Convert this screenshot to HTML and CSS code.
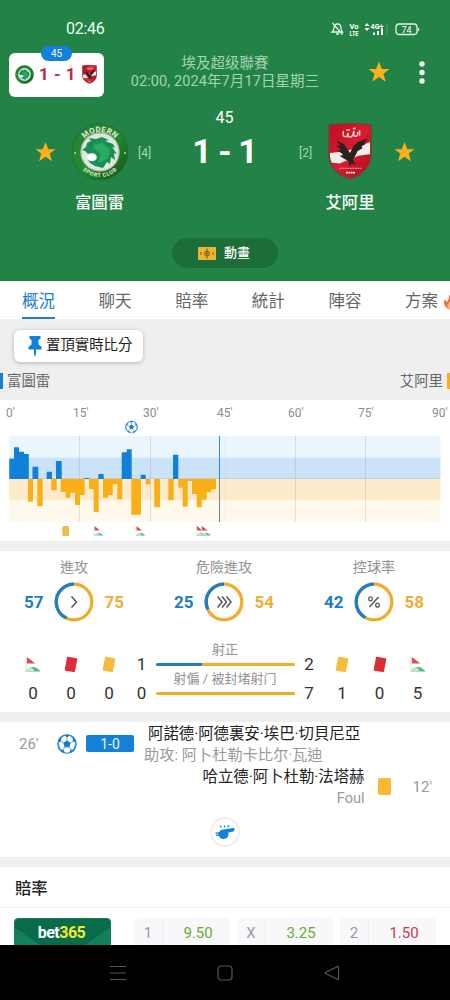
FILE: index.html
```html
<!DOCTYPE html>
<html lang="zh-Hant">
<head>
<meta charset="utf-8">
<title>富圖雷 1 - 1 艾阿里</title>
<link rel="stylesheet" href="styles.css">
</head>
<body>
<svg class="defs" width="0" height="0">
  <defs>
    <linearGradient id="crestGreen" x1="0" y1="0" x2="1" y2="1"><stop offset="0" stop-color="#2a7d36"/><stop offset=".5" stop-color="#238d2b"/><stop offset="1" stop-color="#174f1c"/></linearGradient>
    <linearGradient id="crestRed" x1="0" y1="0" x2="1" y2="1"><stop offset="0" stop-color="#b80e22"/><stop offset=".5" stop-color="#dc1b2c"/><stop offset="1" stop-color="#a90d1d"/></linearGradient>
    <clipPath id="shieldClip"><path d="M3 3Q24-1 45 3V34C44 46 35 52 24 57C13 52 4 46 3 34Z"/></clipPath>
    <path id="arcTop" d="M8 30A21 21 0 0 1 50 30"/>
    <path id="arcBottom" d="M4 29A25 25 0 0 0 54 29"/>
    <symbol id="crestHome" viewBox="0 0 58 58">
      <circle cx="29" cy="29" r="28" fill="url(#crestGreen)" stroke="#286b31" stroke-width="1"/>
      <circle cx="29" cy="29" r="19.500" fill="#dfe6e1"/>
      <circle cx="29" cy="29" r="19" fill="none" stroke="#9bb29f" stroke-width="1"/>
      <path d="M11 27L15 24L16 20L20 18L18 15L25 16L31 14L38 17L34 18L42 21L44 25L41 24L46 31L43 30L44 37L40 34L39 41L36 39L32 45L24 43L19 40L17 37Q24 40 26 35Q26 30 20 30L17 31L14 28Z" fill="#189052"/>
      <path d="M22 22L32 20L39 27L37 35L31 39L26 39Q31 34 28 29L23 26Z" fill="#2baa64"/>
      <path d="M16 33Q20 29 25 33Q25 38 20 38Q16 37 16 33Z" fill="#fff"/>
      <circle cx="4" cy="30" r="1" fill="#b9d9ac"/><circle cx="54" cy="30" r="1" fill="#b9d9ac"/>
    </symbol>
    <symbol id="crestAway" viewBox="0 0 48 60">
      <path d="M2 2Q24-2 46 2V34C45 47 36 54 24 58C12 54 3 47 2 34Z" fill="url(#crestRed)" stroke="#704735" stroke-width="2"/>
      <g clip-path="url(#shieldClip)"><path d="M3 31L13 30L24 28L34 24L46 19V32L33 34L13 42L3 41Z" fill="#f2eded"/></g>
      <path d="M17 8V13Q21 16 22 10V14Q27 16 28 8V13Q33 15 32 9M20 7H24M27 6L30 5M34 7V13" fill="none" stroke="#f4d5d2" stroke-width="1.500"/>
      <path d="M10 18L18 22L24 31L28 23L33 19L43 16L39 20L40 22L36 24L37 26L32 29L29 35L27 38L30 43L26 42L23 45L23 40L18 37L13 34L17 33L11 28L15 28L9 23L14 24Z" fill="#29231d"/>
      <path d="M13 47H36" stroke="#f1c3bd" stroke-width="1" stroke-dasharray="2 .7"/>
      <path d="M20 51.500H29" stroke="#fff" stroke-width="2" stroke-dasharray="1.800 .6"/>
    </symbol>
    <symbol id="star" viewBox="0 0 22 22"><path d="M11 .5L13.900 8H21.500L15.500 12.700L17.700 20.700L11 16L4.300 20.700L6.500 12.700L.5 8H8.100Z" fill="#fdb01b"/></symbol>
    <symbol id="ball" viewBox="0 0 20 20">
      <circle cx="10" cy="10" r="9.200" fill="#fff" stroke="#1c78c8" stroke-width="1.100"/>
      <path d="M10 6.200L13.700 8.900L12.300 13.200H7.700L6.300 8.900ZM6.800 1.400L10 3.300L13.200 1.400L11 .7H9ZM1 8.800L4 7.400L4.600 3.300L2.400 5.200ZM19 8.800L16 7.400L15.400 3.300L17.600 5.200ZM3 15.600L6.500 15.700L7.800 18.700L4.800 17.600ZM17 15.600L13.500 15.700L12.200 18.700L15.200 17.600Z" fill="#0f7dd3"/>
      <path d="M10 6V3M6.500 9L4 7.400M7.700 13L6.400 15.700M12.300 13L13.600 15.700M13.700 9L16 7.400M4.600 3.300L6.800 1.800M15.400 3.300L13.200 1.800M1.300 9L3 15.600M18.700 9L17 15.600" stroke="#1c78c8" stroke-width=".7" fill="none"/>
    </symbol>
    <symbol id="corner" viewBox="0 0 18 18"><path d="M2.500 1L11.500 8H2.500Z" fill="#dc4c56"/><path d="M1.500 1V15" stroke="#d7ded8" stroke-width="1"/><path d="M1 16.500Q9 7 17 16.500Z" fill="#55b886"/><path d="M1 16.500L6 11.700L10 14V16.500Z" fill="#c8e4d2"/></symbol>
    <symbol id="card" viewBox="0 0 14 17"><path d="M4 .8L12.500 2.200Q13.500 2.400 13.300 3.400L11 15.300Q10.800 16.300 9.800 16.100L1.500 14.700Q.5 14.500 .7 13.500L3 1.500Q3.200 .6 4 .8Z" fill="currentColor"/></symbol>
  </defs>
</svg>
<div class="phone">
  <header class="hero">
    <div class="status">
      <span class="clock">02:46</span>
      <svg class="status-icons" width="93" height="16" viewBox="0 0 93 16">
        <g fill="none" stroke="#e3f4e8" stroke-width="1.300"><path d="M1 11H11.500Q10 9.500 10 7Q10 3 6.500 3Q3.500 3 3 7Q3 9.500 1 11ZM5 13H8M1.500 2L11.500 13.500"/><rect x="65" y="3" width="21" height="10.500" rx="3.200"/><path d="M87.500 7V10"/></g>
        <g fill="#fff" class="status-text"><text x="18.500" y="8" textLength="9" lengthAdjust="spacingAndGlyphs">Vo</text><text x="18.500" y="15" textLength="9" lengthAdjust="spacingAndGlyphs">LTE</text><text x="39.500" y="7.500" textLength="13" lengthAdjust="spacingAndGlyphs">4G+</text><text class="battery" x="70.500" y="11.600">74</text><path d="M33.500 5L36 2L38.500 5ZM33.500 7L36 10L38.500 7ZM42 11.500H44V14H42ZM46 10H48V14H46ZM50 7.500H52V14H50Z"/></g>
        <path d="M56 3V14" stroke="#529e6d" stroke-width="1"/>
      </svg>
    </div>
    <div class="titlebar">
      <div class="mini-score">
        <span class="mini-minute">45</span>
        <svg width="19" height="19"><use href="#crestHome"/></svg>
        <b>1 - 1</b>
        <svg width="17" height="19"><use href="#crestAway"/></svg>
      </div>
      <div class="league"><div>埃及超级聯賽</div><div class="date">02:00, 2024年7月17日星期三</div></div>
      <svg class="fav" width="22" height="22"><use href="#star"/></svg>
      <svg class="more" width="8" height="24" fill="#f4fff7"><circle cx="4" cy="3" r="2.700"/><circle cx="4" cy="11.500" r="2.700"/><circle cx="4" cy="20" r="2.700"/></svg>
    </div>
    <div class="match">
      <svg class="fav-team" width="21" height="22"><use href="#star"/></svg>
      <svg class="crest" width="58" height="58" viewBox="0 0 58 58"><use href="#crestHome"/><g class="crest-text"><text><textPath href="#arcTop" startOffset="50%" text-anchor="middle">MODERN</textPath></text><text class="small"><textPath href="#arcBottom" startOffset="50%" text-anchor="middle">SPORT CLUB</textPath></text></g></svg>
      <span class="rank">[4]</span>
      <div class="score"><span>45</span><strong>1 - 1</strong></div>
      <span class="rank away">[2]</span>
      <svg class="crest" width="46" height="58"><use href="#crestAway"/></svg>
      <svg class="fav-team" width="21" height="22"><use href="#star"/></svg>
    </div>
    <div class="teams"><span>富圖雷</span><span>艾阿里</span></div>
    <div class="animate"><svg width="18" height="13" viewBox="0 0 18 13"><rect width="18" height="13" rx="1" fill="#f1b330"/><g fill="none" stroke="#785b18"><circle cx="9" cy="6.500" r="2.500"/><path d="M9 1.500V11.500M7.500 6.500H10.500"/><path d="M3 5V8M15 5V8"/></g></svg><span>動畫</span></div>
  </header>

  <nav class="tabs">
    <span class="active">概況</span><span>聊天</span><span>賠率</span><span>統計</span><span>陣容</span><span>方案</span>
    <svg class="flame" width="14" height="18" viewBox="0 0 14 18"><path d="M6 1Q7 6 10 7Q11 6 11 4Q16 10 13 15Q10 18 5 17Q-1 13 2 7Q3 10 4 10Q7 6 6 1Z" fill="#f06b3d"/><path d="M7 9Q12 13 9 17H6Q2 14 7 9Z" fill="#ffb07a"/></svg>
  </nav>

  <section class="pin-area">
    <div class="pin-button"><svg width="14" height="21" viewBox="0 0 14 21"><path d="M1.500 0H12.500V2.500L10.500 4V8.500L13.500 11V13.500H8V18L7 21L6 18V13.500H.5V11L3.500 8.500V4L1.500 2.500Z" fill="#1180d6"/></svg><span>置頂實時比分</span></div>
    <div class="legend"><span class="home">富圖雷</span><span class="away">艾阿里</span></div>
  </section>

  <section class="timeline">
    <div class="minutes"><span>0'</span><span>15'</span><span>30'</span><span>45'</span><span>60'</span><span>75'</span><span>90'</span></div>
    <svg width="450" height="118" viewBox="0 420 450 118">
      <use href="#ball" x="125" y="420.500" width="13" height="13"/>
      <path fill="#eaf6fc" d="M9 436H440.500V457.500H9Z"/><path fill="#cae3f8" d="M9 457.500H440.500V479H9Z"/><path fill="#fdebcb" d="M9 479H440.500V500.500H9Z"/><path fill="#fff9ec" d="M9 500.500H440.500V522H9Z"/>
      <path d="M79.500 436V522M150.500 436V522M295.500 436V522M365.500 436V522" stroke="#8494a0" stroke-opacity=".25"/>
      <path d="M225.500 436V522" stroke="#8494a0" stroke-opacity=".1"/>
      <path d="M9 478.500H440.500" stroke="#b9c3c5" stroke-opacity=".55"/>
      <path fill="#1180d9" d="M9.300 479V458.700H14V447.300H19V451.700H24V454H28.800V479ZM32.500 479V466.700H38.300V479ZM46.700 479V471.700H52V479ZM56 479V461H61.700V479ZM84.300 479V478H89V479ZM98.300 479V474H103.700V479ZM121.700 479V452.300H126.700V449.300H131.700V479ZM140.700 479V474.700H145.700V479ZM173 479V454.700H178.300V479Z"/>
      <path fill="#fbaf17" d="M28 479V501.700H33V479ZM37.300 479V506H42.700V479ZM51.300 479V490.300H56.700V479ZM60.700 479V492H65.700V497.700H70.300V492.700H75V505H80V495H84.700V479ZM89 479V489H93.700V512H98.700V479ZM103 479V497.700H108V495H112.700V484.300H117.300V499.300H122.300V479ZM131.300 479V514.700H141V479ZM145.700 479V484.300H150.300V479ZM154.300 479V507.300H160V479ZM168.300 479V500.300H173.700V479ZM178.300 479V487.700H182.700V506.700H187.700V481H192V494H196.700V507.300H201.700V499.700H206.700V492.300H211.300V489.300H216V479Z"/>
      <path d="M219.500 436V479" stroke="#3586c8"/><path d="M219.500 479V522" stroke="#6f8798"/>
      <rect x="62.300" y="526" width="6.700" height="10" rx="1.500" fill="#e9be43"/>
      <use href="#corner" x="93" y="525.500" width="11" height="11"/><use href="#corner" x="135" y="525.500" width="11" height="11"/><use href="#corner" x="195.500" y="525.500" width="11" height="11"/><use href="#corner" x="200.500" y="525.500" width="11" height="11"/>
    </svg>
  </section>

  <section class="stats">
    <div class="rings">
      <div class="ring-stat"><h3>進攻</h3><div><b>57</b><svg width="40" height="40" viewBox="0 0 40 40"><circle cx="20" cy="20" r="17.800"/><circle class="part" cx="20" cy="20" r="17.800" pathLength="100" stroke-dasharray="43 57" transform="translate(40 0) scale(-1 1) rotate(-90 20 20)"/><path d="M17.500 14.500L22.500 20L17.500 25.500"/></svg><b class="opp">75</b></div></div>
      <div class="ring-stat"><h3>危險進攻</h3><div><b>25</b><svg width="40" height="40" viewBox="0 0 40 40"><circle cx="20" cy="20" r="17.800"/><circle class="part" cx="20" cy="20" r="17.800" pathLength="100" stroke-dasharray="32 68" transform="translate(40 0) scale(-1 1) rotate(-90 20 20)"/><path d="M13.500 14.500L18 20L13.500 25.500M18 14.500L22.500 20L18 25.500M22.500 14.500L27 20L22.500 25.500"/></svg><b class="opp">54</b></div></div>
      <div class="ring-stat"><h3>控球率</h3><div><b>42</b><svg width="40" height="40" viewBox="0 0 40 40"><circle cx="20" cy="20" r="17.800"/><circle class="part" cx="20" cy="20" r="17.800" pathLength="100" stroke-dasharray="42 58" transform="translate(40 0) scale(-1 1) rotate(-90 20 20)"/><path d="M15.500 25L24.500 15"/><g class="percent"><ellipse cx="16.500" cy="16.800" rx="1.800" ry="2"/><ellipse cx="23.500" cy="23.200" rx="1.800" ry="2"/></g></svg><b class="opp">58</b></div></div>
    </div>
    <div class="counts">
      <div class="count"><svg width="18" height="18"><use href="#corner"/></svg><span>0</span></div>
      <div class="count"><svg class="red" width="14" height="17"><use href="#card"/></svg><span>0</span></div>
      <div class="count"><svg class="yellow" width="14" height="17"><use href="#card"/></svg><span>0</span></div>
      <div class="count"><span class="top">1</span><span>0</span></div>
      <div class="shots"><span>射正</span><i class="split"></i><span>射偏 / 被封堵射门</span><i></i></div>
      <div class="count"><span class="top">2</span><span>7</span></div>
      <div class="count"><svg class="yellow" width="14" height="17"><use href="#card"/></svg><span>1</span></div>
      <div class="count"><svg class="red" width="14" height="17"><use href="#card"/></svg><span>0</span></div>
      <div class="count"><svg width="18" height="18"><use href="#corner"/></svg><span>5</span></div>
    </div>
  </section>

  <section class="events">
    <div class="event home"><span class="min">26'</span><svg width="20" height="20"><use href="#ball"/></svg><span class="badge">1-0</span><div class="who"><p class="name">阿諾德·阿德裏安·埃巴·切貝尼亞</p><p class="note">助攻: 阿卜杜勒卡比尔·瓦迪</p></div></div>
    <div class="event away"><div class="who"><p class="name">哈立德·阿卜杜勒·法塔赫</p><p class="note">Foul</p></div><i class="booking"></i><span class="min">12'</span></div>
    <div class="whistle"><svg width="20" height="16" viewBox="0 0 20 16"><path d="M8 5.500L18.500 4Q20 4 19.500 6L18.500 7.500L13.500 8.500Q14 15 8.500 15Q5 15 4 12L1 11.500L.5 8.500L4 8.300Q5 5.800 8 5.500Z" fill="#1180d6"/><path d="M1.500 9.500H3V10.700H1.500Z" fill="#fff"/><path d="M9.500 3.500V1.500M6.500 3.500L5 1.500M12.500 3.200L14 1" stroke="#1180d6" stroke-width="1.200"/></svg></div>
  </section>

  <section class="odds">
    <h2>賠率</h2>
    <div class="odds-row"><div class="bookmaker"><span>bet<em>365</em></span></div><div class="odd"><span>1</span><b>9.50</b></div><div class="odd"><span>X</span><b>3.25</b></div><div class="odd"><span>2</span><b class="down">1.50</b></div></div>
  </section>

  <footer class="system-nav"><svg width="16" height="16"><path d="M0 1.500H16M0 8H16M0 14.500H16"/></svg><svg width="16" height="16"><rect x="1" y="1" width="14" height="14" rx="3"/></svg><svg width="16" height="16"><path d="M14.500 2.200V13.800Q14.500 14.800 13.500 14.300L1.800 8.800Q.8 8 1.800 7.200L13.500 1.600Q14.500 1.200 14.500 2.200Z"/></svg></footer>
</div>
</body>
</html>
```
FILE: styles.css
```css
* { box-sizing: border-box; }
body { margin: 0; font-family: Roboto, "Noto Sans CJK TC", "Noto Sans CJK SC", sans-serif; color: #333; background: #fff; }
h2, h3, p { margin: 0; font-weight: 400; }
svg { display: block; flex: none; overflow: visible; }
.defs { position: absolute; }
.phone { width: 450px; height: 1000px; overflow: hidden; display: flex; flex-direction: column; background: #fff; }
.phone > * { flex: none; }

.hero { height: 281px; background: #238347; color: #fff; display: flex; flex-direction: column; }
.status { height: 46px; padding: 11px 26px 0 66px; display: flex; align-items: center; justify-content: space-between; }
.clock { font-size: 16px; line-height: 20px; color: #edfff2; letter-spacing: -.3px; }
.status-text { font-size: 7.5px; font-weight: 700; }
.battery { font-size: 9px; font-weight: 400; }
.titlebar { height: 62px; padding-left: 9px; display: flex; align-items: flex-start; }
.mini-score { position: relative; width: 95px; height: 44px; margin-top: 7px; padding: 0 6px 2px 6px; display: flex; align-items: center; justify-content: space-between; background: #fff; border-radius: 6px; }
.mini-score b { color: #c6253d; font-size: 17px; line-height: 20px; letter-spacing: .5px; white-space: nowrap; }
.mini-minute { position: absolute; top: -7px; left: 32px; width: 31px; height: 15px; border-radius: 8px; background: #1180df; font-size: 10px; line-height: 15px; text-align: center; }
.league { width: 242px; margin-top: 9px; color: #a2d5b4; font-size: 14.5px; line-height: 18px; text-align: center; white-space: nowrap; }
.date { letter-spacing: .1px; }
.fav { margin: 15px 0 0 22px; }
.more { margin: 15px 0 0 28px; }
.match { height: 80px; padding: 0 35px; display: grid; grid-template-columns: 36px 58px 30px 131px 37px 46px 42px; align-items: center; }
.match > svg { margin-top: 8px; }
.match > .fav-team:last-child { justify-self: end; }
.crest-text { fill: #e1ecdc; font-size: 7.8px; font-weight: 700; letter-spacing: .4px; }
.crest-text .small { font-size: 5.5px; letter-spacing: .6px; }
.rank { color: #a2d5b4; font-size: 12px; margin: 9px 0 0 9px; }
.rank.away { margin-left: 9px; }
.score { height: 80px; padding-top: 1px; display: flex; flex-direction: column; align-items: center; }
.score span { font-size: 16px; line-height: 18px; }
.score strong { margin-top: 5px; font-size: 34px; line-height: 39px; letter-spacing: -1px; white-space: nowrap; font-weight: 700; }
.teams { height: 50px; padding-top: 5px; display: grid; grid-template-columns: 199px 302px; font-size: 16.4px; line-height: 20px; font-weight: 500; }
.teams span { text-align: center; }
.animate { align-self: center; width: 106px; height: 30px; padding-right: 2px; border-radius: 15px; background: #1d6d39; display: flex; align-items: center; justify-content: center; gap: 8px; font-size: 13px; line-height: 18px; font-weight: 500; }

.tabs { height: 38px; padding: 2px 0 0 22px; display: flex; gap: 43.6px; background: #fff; color: #666; font-size: 16.5px; line-height: 38px; white-space: nowrap; }
.tabs .active { color: #207fca; border-bottom: 3px solid #207fca; height: 37px; }
.flame { margin: 9px 0 0 -38.500px; }

.pin-area { height: 81px; padding-top: 11px; background: #efefef; }
.pin-button { width: 129px; height: 32px; margin-left: 14px; padding-left: 14px; display: flex; align-items: center; gap: 4px; border-radius: 6px; background: #fff; box-shadow: 0 1px 4px #8889; color: #222; font-size: 14.4px; line-height: 20px; }
.legend { margin-top: 11px; display: flex; justify-content: space-between; color: #666; font-size: 14.4px; line-height: 16px; }
.legend span { height: 16px; padding-top: 1px; }
.legend .home { border-left: 3px solid #1180d6; padding-left: 4px; }
.legend .away { border-right: 3px solid #fbaf17; padding-right: 4px; }

.timeline { height: 141px; }
.minutes { height: 20px; padding: 4px 0 0 6px; display: grid; grid-template-columns: 67px 70px 74px 71px 70px 74px 18px; color: #8c8c8c; font-size: 12px; line-height: 18px; }

.stats { height: 181px; border: solid #efefef; border-width: 10px 0; }
.rings { height: 86px; padding: 5px 26px 0 24px; display: flex; justify-content: space-between; }
.ring-stat { width: 100px; }
.ring-stat h3 { color: #929292; font-size: 14.1px; line-height: 22px; text-align: center; }
.ring-stat div { height: 48px; display: flex; align-items: center; justify-content: space-between; }
.ring-stat b { color: #207dc6; font-size: 17px; }
.ring-stat b.opp { color: #edb036; }
.ring-stat circle { fill: none; stroke: #efad2a; stroke-width: 3.300; }
.ring-stat circle.part { stroke: #207dc6; }
.ring-stat path { fill: none; stroke: #555; stroke-width: 1.500; }
.percent { fill: none; stroke: #555; stroke-width: 1.200; }
.counts { height: 75px; padding-left: 14px; display: grid; grid-template-columns: 38px 38px 38px 27px 140px 28px 38px 37px 39px; }
.count { padding-top: 18px; display: flex; flex-direction: column; align-items: center; font-size: 17px; line-height: 20px; }
.count svg { height: 17px; margin: 1px 0 10px; }
.count span { height: 20px; }
.count .top { margin-bottom: 9px; margin-top: -1px; }
.red { color: #dc2e36; }
.yellow { color: #f5bb3d; }
.shots { padding-top: 4px; display: flex; flex-direction: column; align-items: center; color: #929292; font-size: 13px; line-height: 18px; white-space: nowrap; }
.shots i { width: 139px; height: 3.500px; margin: 3.500px 0 4px; border-radius: 2px; background: #efad2a; }
.shots .split { background: linear-gradient(90deg, #207dc6 33.3%, #efad2a 33.3%); }

.events { height: 135px; }
.event { display: flex; color: #9a9a9a; white-space: nowrap; }
.event.home { height: 43px; padding-left: 19px; align-items: center; }
.event .min { font-size: 15px; }
.event.home svg { margin-left: 18px; }
.event.home .min { width: 20px; }
.badge { width: 48px; height: 17px; margin-left: 9px; border-radius: 2px; background: #1580d6; color: #e9f5ff; font-size: 14px; line-height: 18px; text-align: center; }
.event.home .who { margin-left: 10px; }
.who { padding-top: 2px; font-size: 15.4px; line-height: 21px; }
.who .name { color: #222; }
.event.home .name { padding-left: 4px; }
.event.away { height: 43px; padding-right: 18px; justify-content: flex-end; align-items: center; }
.event.away .who { padding-right: 1px; text-align: right; }
.booking { width: 13px; height: 17px; margin: 0 22px 0 12px; border-radius: 2px; background: #fdb833; }
.event .note { font-size: 15.2px; }
.event.away .note { font-size: 14.5px; }
.whistle { width: 30px; height: 30px; margin: 9px auto 0; border: 2px solid #eee; border-radius: 50%; display: flex; align-items: center; justify-content: center; }

.odds { height: 88px; overflow: hidden; border-top: 10px solid #efefef; }
.odds h2 { height: 41px; padding-left: 15px; border-bottom: 1px solid #eee; color: #222; font-size: 16.3px; line-height: 44px; font-weight: 500; }
.odds-row { padding: 10px 14px; display: flex; }
.bookmaker { width: 97px; height: 30px; margin-right: 23px; border: 1px solid #147c59; border-radius: 4px; background: linear-gradient(35deg, #14805b 20%, transparent 21%), linear-gradient(-35deg, #14805b 20%, transparent 21%), #086c4b; color: #fff; font-size: 16px; font-weight: 700; line-height: 28px; text-align: center; letter-spacing: -.5px; }
.bookmaker span { margin-right: 2px; }
.bookmaker em { color: #f5e72e; font-style: normal; }
.odd { width: 96px; height: 30px; margin-right: 7px; display: flex; border-radius: 4px; background: #f8f8fa; font-size: 15px; line-height: 30px; text-align: center; }
.odd:last-child { margin-right: 0; }
.odd span { width: 29px; border-right: 1px solid #eeeef2; color: #999aa4; }
.odd b { flex: 1; padding-left: 3px; font-weight: 400; color: #65ad30; }
.odd b.down { color: #c8374b; }

.system-nav { height: 55px; padding: 0 110px; display: flex; align-items: center; justify-content: space-between; background: #000; }
.system-nav svg { fill: none; stroke: #555; stroke-width: 1.200; }
```
